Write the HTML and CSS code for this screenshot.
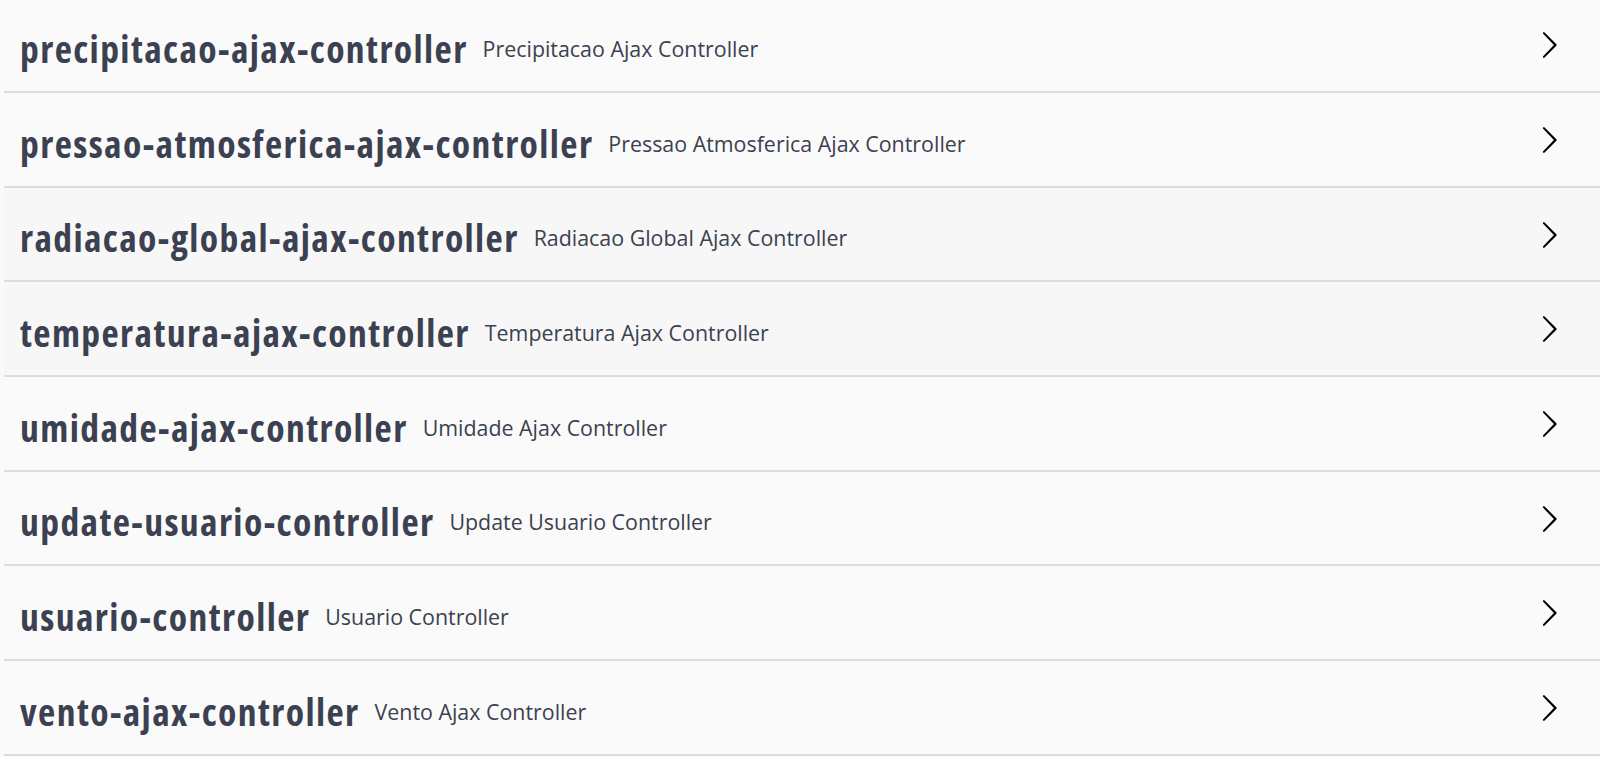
FILE: index.html
```html
<!DOCTYPE html>
<html lang="pt">
<head>
<meta charset="utf-8">
<title>Controllers</title>
<link rel="stylesheet" href="styles.css">
</head>
<body>
<div class="tags">
  <div class="tag">
    <h3 class="tag-name">precipitacao-ajax-controller</h3>
    <small class="tag-desc">Precipitacao Ajax Controller</small>
    <button class="expand" aria-label="expand"><svg viewBox="0 0 20 20" width="30" height="30"><path d="M13.25 10L6.109 2.58a.697.697 0 0 1 0-.979.68.68 0 0 1 .969 0l7.83 7.908a.697.697 0 0 1 0 .979l-7.830 7.908a.68.68 0 0 1-.969 0 .697.697 0 0 1 0-.979L13.25 10z"/></svg></button>
  </div>
  <div class="tag">
    <h3 class="tag-name">pressao-atmosferica-ajax-controller</h3>
    <small class="tag-desc">Pressao Atmosferica Ajax Controller</small>
    <button class="expand" aria-label="expand"><svg viewBox="0 0 20 20" width="30" height="30"><path d="M13.25 10L6.109 2.58a.697.697 0 0 1 0-.979.68.68 0 0 1 .969 0l7.83 7.908a.697.697 0 0 1 0 .979l-7.830 7.908a.68.68 0 0 1-.969 0 .697.697 0 0 1 0-.979L13.25 10z"/></svg></button>
  </div>
  <div class="tag tinted">
    <h3 class="tag-name">radiacao-global-ajax-controller</h3>
    <small class="tag-desc">Radiacao Global Ajax Controller</small>
    <button class="expand" aria-label="expand"><svg viewBox="0 0 20 20" width="30" height="30"><path d="M13.25 10L6.109 2.58a.697.697 0 0 1 0-.979.68.68 0 0 1 .969 0l7.83 7.908a.697.697 0 0 1 0 .979l-7.830 7.908a.68.68 0 0 1-.969 0 .697.697 0 0 1 0-.979L13.25 10z"/></svg></button>
  </div>
  <div class="tag tinted">
    <h3 class="tag-name">temperatura-ajax-controller</h3>
    <small class="tag-desc">Temperatura Ajax Controller</small>
    <button class="expand" aria-label="expand"><svg viewBox="0 0 20 20" width="30" height="30"><path d="M13.25 10L6.109 2.58a.697.697 0 0 1 0-.979.68.68 0 0 1 .969 0l7.83 7.908a.697.697 0 0 1 0 .979l-7.830 7.908a.68.68 0 0 1-.969 0 .697.697 0 0 1 0-.979L13.25 10z"/></svg></button>
  </div>
  <div class="tag">
    <h3 class="tag-name">umidade-ajax-controller</h3>
    <small class="tag-desc">Umidade Ajax Controller</small>
    <button class="expand" aria-label="expand"><svg viewBox="0 0 20 20" width="30" height="30"><path d="M13.25 10L6.109 2.58a.697.697 0 0 1 0-.979.68.68 0 0 1 .969 0l7.83 7.908a.697.697 0 0 1 0 .979l-7.830 7.908a.68.68 0 0 1-.969 0 .697.697 0 0 1 0-.979L13.25 10z"/></svg></button>
  </div>
  <div class="tag">
    <h3 class="tag-name">update-usuario-controller</h3>
    <small class="tag-desc">Update Usuario Controller</small>
    <button class="expand" aria-label="expand"><svg viewBox="0 0 20 20" width="30" height="30"><path d="M13.25 10L6.109 2.58a.697.697 0 0 1 0-.979.68.68 0 0 1 .969 0l7.83 7.908a.697.697 0 0 1 0 .979l-7.830 7.908a.68.68 0 0 1-.969 0 .697.697 0 0 1 0-.979L13.25 10z"/></svg></button>
  </div>
  <div class="tag">
    <h3 class="tag-name">usuario-controller</h3>
    <small class="tag-desc">Usuario Controller</small>
    <button class="expand" aria-label="expand"><svg viewBox="0 0 20 20" width="30" height="30"><path d="M13.25 10L6.109 2.58a.697.697 0 0 1 0-.979.68.68 0 0 1 .969 0l7.83 7.908a.697.697 0 0 1 0 .979l-7.830 7.908a.68.68 0 0 1-.969 0 .697.697 0 0 1 0-.979L13.25 10z"/></svg></button>
  </div>
  <div class="tag">
    <h3 class="tag-name">vento-ajax-controller</h3>
    <small class="tag-desc">Vento Ajax Controller</small>
    <button class="expand" aria-label="expand"><svg viewBox="0 0 20 20" width="30" height="30"><path d="M13.25 10L6.109 2.58a.697.697 0 0 1 0-.979.68.68 0 0 1 .969 0l7.83 7.908a.697.697 0 0 1 0 .979l-7.830 7.908a.68.68 0 0 1-.969 0 .697.697 0 0 1 0-.979L13.25 10z"/></svg></button>
  </div>
</div>
</body>
</html>
```
FILE: styles.css
```css
html, body {
  margin: 0;
  padding: 0;
  background: #fafafa;
}
body {
  overflow: hidden;
  font-family: "Open Sans", "Liberation Sans", sans-serif;
  color: #3b4151;
}
.tags {
  margin: -1.67px 0 0 4px;
}
.tag {
  box-sizing: border-box;
  height: 94.67px;
  padding: 7.5px 36px 0 16px;
  display: flex;
  align-items: center;
  border-bottom: 2px solid #dcdddf;
}
.tag.tinted {
  background: #f7f7f7;
}
.tag-name {
  margin: 0;
  font-family: "Open Sans", "Liberation Sans", sans-serif;
  font-stretch: condensed;
  font-weight: 700;
  font-size: 37.6px;
  letter-spacing: 1.4px;
  color: #3b4151;
  white-space: nowrap;
}
.tag-desc {
  flex: 1;
  padding-left: 15px;
  font-family: "Open Sans", sans-serif;
  font-size: 21.4px;
  color: #3b4151;
  white-space: nowrap;
}
.expand {
  background: none;
  border: none;
  padding: 0;
  margin: 0 0 6px 0;
  width: 30px;
  height: 30px;
  display: flex;
}
.expand svg {
  width: 30px;
  height: 30px;
  fill: #000;
}
```
